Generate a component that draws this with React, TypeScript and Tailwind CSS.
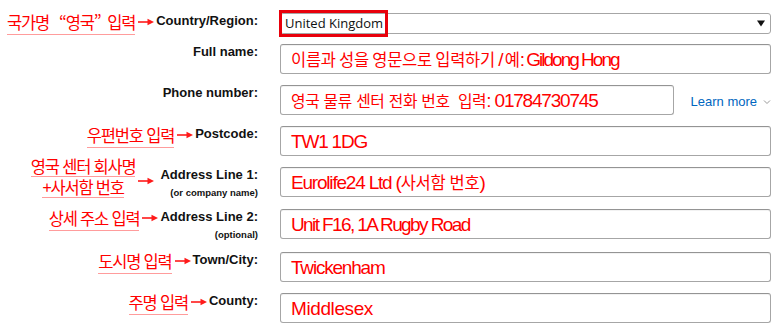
import { ReactNode } from "react"

const red = "text-[#ff0000]"
const ko = "[font-family:'Noto_Sans_CJK_KR','Noto_Sans',sans-serif]"
const lab = "[font-family:'Liberation_Sans',Arial,sans-serif]"

function Arrow({ className = "" }: { className?: string }) {
  return (
    <svg width="16" height="8" viewBox="0 0 16 8" className={"shrink-0 " + className}>
      <line x1="0" y1="4" x2="11" y2="4" stroke="#ff1a1a" strokeWidth="1.6" />
      <path d="M9.5 0.8 L16 4 L9.5 7.2 Z" fill="#ff1a1a" />
    </svg>
  )
}

function Note({ children }: { children: ReactNode }) {
  return (
    <span className={`${ko} ${red} text-[16.5px] leading-[20px] tracking-[-1.2px] whitespace-pre border-b border-[#ff9c9c]`}>
      {children}
    </span>
  )
}

function Label({ text, sub }: { text: string; sub?: string }) {
  return (
    <div className={`${lab} flex flex-col items-end text-[#111]`}>
      <span className="text-[13px] font-bold leading-[16px] whitespace-nowrap">{text}</span>
      {sub && <span className="text-[9.5px] font-bold leading-[12px] mt-[4px] whitespace-nowrap">{sub}</span>}
    </div>
  )
}

// korean runs get the gothic face, the rest a tight sans
function Mixed({ text, latin, kor }: { text: string; latin: string; kor: string }) {
  const parts = text.split(/([\uAC00-\uD7A3]+)/)
  return (
    <span className="whitespace-pre leading-none flex items-center">
      {parts.map((p, i) =>
        i % 2 === 1 ? (
          <span key={i} className={`${ko} ${kor}`}>{p}</span>
        ) : (
          <span key={i} className={`${lab} ${latin}`}>{p}</span>
        )
      )}
    </span>
  )
}

function Field({
  value,
  w = "w-full",
  latin = "text-[19px] tracking-[-1.2px]",
  kor = "text-[16.5px] tracking-[-0.25px]",
}: { value: string; w?: string; latin?: string; kor?: string }) {
  return (
    <div className={`${w} h-[30px] border border-[#a6a6a6] border-t-[#949494] rounded-[3px] bg-white flex items-center pl-[10px] pt-[1px] shadow-[inset_0_1px_0_rgba(0,0,0,0.05)] ${red}`}>
      <Mixed text={value} latin={latin} kor={kor} />
    </div>
  )
}

function Row({ left, children, className = "" }: { left: ReactNode; children: ReactNode; className?: string }) {
  return (
    <div className={"grid grid-cols-[258px_491px] gap-x-[22px] h-[30px] " + className}>
      <div className="flex justify-end items-start">{left}</div>
      <div className="flex items-start">{children}</div>
    </div>
  )
}

export default function App() {
  return (
    <div lang="ko" className="w-[784px] h-[335px] bg-white overflow-hidden pt-[13px]">
      {/* Country */}
      <Row
        className="!h-[21px]"
        left={
          <>
            <div className="mt-[-2px]"><Note>국가명   “영국”  입력</Note></div>
            <Arrow className="mt-[5px] ml-[3px] mr-[2px]" />
            <Label text="Country/Region:" />
          </>
        }
      >
        <div className="relative w-full h-[21px] border border-[#a6a6a6] rounded-[3px] bg-white flex items-center pl-[4px]">
          <span className="[font-family:'Open_Sans',sans-serif] text-[13px] text-[#0f1111]">United Kingdom</span>
          <svg width="8" height="7" viewBox="0 0 8 7" className="ml-auto mr-[5px]">
            <path d="M0 0.5 H8 L4 6.5 Z" fill="#111" />
          </svg>
          <div className="absolute left-[-2px] top-[-4px] w-[109px] h-[27px] border-[3px] border-[#e8000b]" />
        </div>
      </Row>

      <Row className="mt-[10px]" left={<Label text="Full name:" />}>
        <Field value="이름과 성을 영문으로 입력하기 / 예: Gildong Hong" latin="text-[19px] tracking-[-2px]" />
      </Row>

      <Row className="mt-[11px]" left={<Label text="Phone number:" />}>
        <Field value="영국 물류 센터 전화 번호  입력: 01784730745" w="w-[394px]" kor="text-[15.8px] tracking-[-0.3px]" />
        <div className={`${lab} ml-[17px] mt-[7px] flex items-center text-[13px] text-[#0066c0] whitespace-nowrap`}>
          Learn more
          <svg width="8" height="6" viewBox="0 0 8 6" className="ml-[6px]">
            <path d="M1 1.5 L4 4.5 L7 1.5" fill="none" stroke="#999" strokeWidth="1" />
          </svg>
        </div>
      </Row>

      <Row
        className="mt-[11px]"
        left={
          <>
            <div className="mt-[-2px]"><Note>우편번호 입력</Note></div>
            <Arrow className="mt-[5px] ml-[3px] mr-[2px]" />
            <Label text="Postcode:" />
          </>
        }
      >
        <Field value="TW1 1DG" />
      </Row>

      <Row
        className="mt-[11px]"
        left={
          <>
            <div className="mt-[-11px] flex flex-col items-center">
              <Note>영국 센터 회사명</Note>
              <Note>+사서함 번호</Note>
            </div>
            <Arrow className="mt-[10px] ml-[3px] mr-[6px]" />
            <Label text="Address Line 1:" sub="(or company name)" />
          </>
        }
      >
        <Field value="Eurolife24 Ltd (사서함 번호)" />
      </Row>

      <Row
        className="mt-[12px]"
        left={
          <>
            <div className="mt-[-2px]"><Note>상세 주소 입력</Note></div>
            <Arrow className="mt-[5px] ml-[3px] mr-[2px]" />
            <Label text="Address Line 2:" sub="(optional)" />
          </>
        }
      >
        <Field value="Unit F16, 1A Rugby Road" latin="text-[19px] tracking-[-1.6px]" />
      </Row>

      <Row
        className="mt-[13px]"
        left={
          <>
            <div className="mt-[-2px]"><Note>도시명 입력</Note></div>
            <Arrow className="mt-[5px] ml-[3px] mr-[2px]" />
            <Label text="Town/City:" />
          </>
        }
      >
        <Field value="Twickenham" />
      </Row>

      <Row
        className="mt-[11px]"
        left={
          <>
            <div className="mt-[-2px]"><Note>주명 입력</Note></div>
            <Arrow className="mt-[5px] ml-[3px] mr-[2px]" />
            <Label text="County:" />
          </>
        }
      >
        <Field value="Middlesex" latin="text-[19px] tracking-[-0.4px]" />
      </Row>
    </div>
  )
}
